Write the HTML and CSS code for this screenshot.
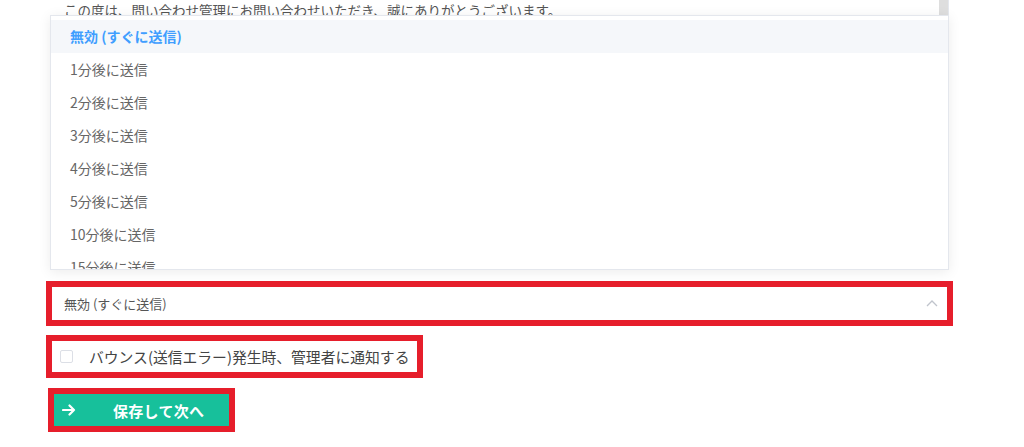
FILE: index.html
```html
<!DOCTYPE html>
<html lang="ja">
<head>
<meta charset="utf-8">
<title>送信設定</title>
<link rel="stylesheet" href="styles.css">
</head>
<body>
<div class="page">
  <div class="textarea">
    <div class="textarea-text">この度は、問い合わせ管理にお問い合わせいただき、誠にありがとうございます。</div>
    <div class="textarea-scroll"></div>
  </div>

  <div class="mark select-mark">
    <div class="select">
      <span class="select-value">無効 (すぐに送信)</span>
      <svg class="chevron" width="12" height="8" viewBox="0 0 12 8"><path d="M1 7 L6 2 L11 7" fill="none" stroke="#c0c4cc" stroke-width="1.3"/></svg>
    </div>
    <div class="dropdown">
      <ul class="options">
        <li class="option selected">無効 (すぐに送信)</li>
        <li class="option">1分後に送信</li>
        <li class="option">2分後に送信</li>
        <li class="option">3分後に送信</li>
        <li class="option">4分後に送信</li>
        <li class="option">5分後に送信</li>
        <li class="option">10分後に送信</li>
        <li class="option">15分後に送信</li>
      </ul>
    </div>
  </div>

  <div class="mark check-mark">
    <label class="check">
      <span class="checkbox"></span>
      <span class="check-label">バウンス(送信エラー)発生時、管理者に通知する</span>
    </label>
  </div>

  <div class="mark button-mark">
    <button class="save-btn">
      <svg class="arrow" width="14" height="12" viewBox="0 0 14 12"><path d="M1 6 H12 M7.5 1.5 L12 6 L7.5 10.5" fill="none" stroke="#fff" stroke-width="2.2" stroke-linecap="round" stroke-linejoin="round"/></svg>
      <span class="save-text">保存して次へ</span>
    </button>
  </div>
</div>
</body>
</html>
```

FILE: styles.css
```css
* { box-sizing: border-box; }
html, body { margin: 0; padding: 0; background: #fff; }
body {
  font-family: "Noto Sans CJK JP", "Noto Sans", sans-serif;
  color: #606266;
  width: 1024px;
  height: 447px;
  overflow: hidden;
}
.page {
  padding-left: 46px;
}
.textarea {
  margin-left: 4px;
  width: 899px;
  height: 15px;
  overflow: hidden;
  display: flex;
  border-right: 1px solid #e4e7ed;
  background: #fff;
}
.textarea-text {
  flex: 1;
  padding-left: 14px;
  padding-top: 2px;
  font-size: 13.5px;
  line-height: 16px;
  color: #555;
  white-space: nowrap;
}
.textarea-scroll {
  width: 9px;
  background: #dedede;
}
.mark {
  border: 6px solid #e61e2b;
  background: #fff;
}
.select-mark {
  position: relative;
  margin-top: 266px;
  width: 907px;
}
.select {
  height: 33px;
  display: flex;
  align-items: center;
  padding-left: 12px;
  padding-right: 9px;
  justify-content: space-between;
}
.select-value {
  font-size: 13px;
  color: #555;
}
.chevron { display: block; margin-top: -2px; }
.dropdown {
  position: absolute;
  left: -2px;
  bottom: calc(100% + 17px);
  width: 899px;
  height: 255px;
  background: #fff;
  border: 1px solid #e4e7ed;
  box-shadow: 0 2px 12px rgba(0, 0, 0, 0.08);
  overflow: hidden;
  padding-top: 4px;
}
.options {
  list-style: none;
  margin: 0;
  padding: 0;
}
.option {
  height: 33px;
  line-height: 33px;
  padding-left: 19px;
  font-size: 14px;
  color: #666;
}
.option.selected {
  background: #f5f7fa;
  color: #409eff;
  font-weight: 700;
}
.check-mark {
  margin-top: 9px;
  width: 377px;
}
.check {
  height: 31px;
  display: flex;
  align-items: center;
  padding-left: 8px;
}
.checkbox {
  width: 13px;
  height: 13px;
  border: 1px solid #dcdfe6;
  border-radius: 2px;
  background: #fff;
  margin-right: 16px;
}
.check-label {
  font-size: 14.8px;
  color: #444;
  white-space: nowrap;
}
.button-mark {
  margin-top: 10px;
  margin-left: 2px;
  width: 187px;
}
.save-btn {
  display: flex;
  align-items: center;
  width: 175px;
  height: 32px;
  border: 0;
  margin: 0;
  padding: 0 0 0 8px;
  background: #17c09b;
  color: #fff;
  font-family: inherit;
  cursor: pointer;
}
.arrow { display: block; margin-right: 37px; }
.save-text {
  font-size: 15px;
  font-weight: 700;
  letter-spacing: 0.3px;
}
```
